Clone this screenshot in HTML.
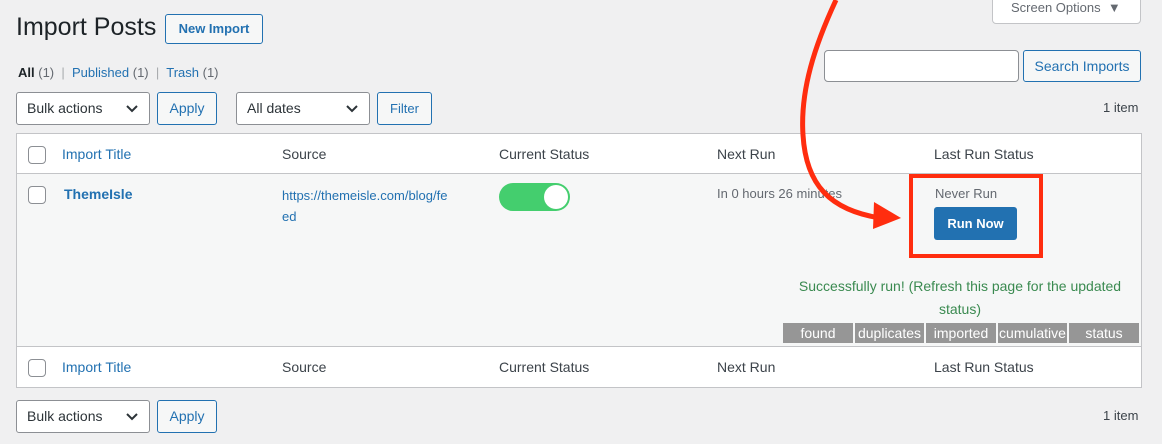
<!DOCTYPE html>
<html><head><style>
*{box-sizing:border-box;margin:0;padding:0}
body{width:1162px;height:444px;background:#f0f0f1;font-family:"Liberation Sans",sans-serif;font-size:14px;color:#3c434a;position:relative;overflow:hidden}
.a{position:absolute;white-space:nowrap}
.btn{position:absolute;border:1px solid #2271b1;color:#2271b1;background:#f6f7f7;border-radius:3px;text-align:center;font-size:14px}
.sel{position:absolute;border:1px solid #8c8f94;background:#fff;border-radius:3px;font-size:14px;padding-left:10px;color:#2c3338}
.sel svg{position:absolute;right:10px;top:11px}
.cb{position:absolute;width:18px;height:18px;border:1px solid #8c8f94;border-radius:4px;background:#fff}
.lnk{color:#2271b1}
.cell{position:absolute;top:323px;height:20px;background:#969696;color:#fff;text-align:center;font-size:14px;line-height:20px}
</style></head><body>
<div class="a" style="left:16px;top:13px;font-size:25px;color:#1d2327">Import Posts</div>
<div class="btn" style="left:165px;top:14px;width:98px;height:30px;line-height:28px;font-weight:bold;font-size:13px">New Import</div>
<div class="a" style="left:992px;top:-8px;width:149px;height:32px;background:#fff;border:1px solid #c3c4c7;border-radius:0 0 4px 4px;padding:7px 0 0 18px;font-size:13px;color:#646970">Screen Options &nbsp;▼</div>
<div class="a" style="left:18px;top:65px;font-size:13px"><b style="color:#1d2327;font-weight:600">All</b> <span style="color:#646970">(1)</span> &nbsp;<span style="color:#a7aaad">|</span>&nbsp; <span class="lnk">Published</span> <span style="color:#646970">(1)</span> &nbsp;<span style="color:#a7aaad">|</span>&nbsp; <span class="lnk">Trash</span> <span style="color:#646970">(1)</span></div>
<div class="a" style="left:824px;top:50px;width:195px;height:32px;background:#fff;border:1px solid #8c8f94;border-radius:4px"></div>
<div class="btn" style="left:1023px;top:50px;width:118px;height:32px;line-height:30px">Search Imports</div>
<div class="sel" style="left:16px;top:92px;width:134px;height:33px;line-height:31px">Bulk actions<svg width="14" height="10"><path d="M2 2l5 5 5-5" stroke="#2c3338" stroke-width="2" fill="none"/></svg></div>
<div class="btn" style="left:157px;top:92px;width:60px;height:33px;line-height:31px">Apply</div>
<div class="sel" style="left:236px;top:92px;width:134px;height:33px;line-height:31px">All dates<svg width="14" height="10"><path d="M2 2l5 5 5-5" stroke="#2c3338" stroke-width="2" fill="none"/></svg></div>
<div class="btn" style="left:377px;top:92px;width:55px;height:33px;line-height:31px;font-size:13px">Filter</div>
<div class="a" style="left:1103px;top:100px;font-size:13px">1 item</div>

<div class="a" style="left:16px;top:133px;width:1126px;height:255px;background:#fff;border:1px solid #c3c4c7"></div>
<div class="a" style="left:17px;top:173px;width:1124px;height:174px;background:#f6f7f7;border-top:1px solid #c3c4c7;border-bottom:1px solid #c3c4c7"></div>

<div class="cb" style="left:28px;top:146px"></div>
<div class="a lnk" style="left:62px;top:146px">Import Title</div>
<div class="a" style="left:282px;top:146px">Source</div>
<div class="a" style="left:499px;top:146px">Current Status</div>
<div class="a" style="left:717px;top:146px">Next Run</div>
<div class="a" style="left:934px;top:146px">Last Run Status</div>

<div class="cb" style="left:28px;top:186px"></div>
<div class="a lnk" style="left:64px;top:186px;font-weight:bold">ThemeIsle</div>
<div class="a lnk" style="left:282px;top:185px;font-size:13px;line-height:21px">https://themeisle.com/blog/fe<br>ed</div>
<div class="a" style="left:499px;top:183px;width:71px;height:28px;border-radius:14px;background:#44ce6e"><div style="position:absolute;right:2px;top:2px;width:24px;height:24px;border-radius:50%;background:#fff"></div></div>
<div class="a" style="left:717px;top:186px;font-size:13px;color:#646970">In 0 hours 26 minutes</div>
<div class="a" style="left:935px;top:186px;font-size:13px;color:#646970">Never Run</div>
<div class="a" style="left:934px;top:207px;width:83px;height:33px;background:#2271b1;border-radius:3px;color:#fff;font-weight:bold;font-size:13px;text-align:center;line-height:33px">Run Now</div>
<div class="a" style="left:909px;top:174px;width:134px;height:84px;border:4px solid #ff2d0f"></div>
<div class="a" style="left:782px;top:275px;width:356px;text-align:center;white-space:normal;color:#3a8a50;line-height:23px">Successfully run! (Refresh this page for the updated status)</div>
<div class="cell" style="left:783px;width:70px">found</div>
<div class="cell" style="left:855px;width:69px">duplicates</div>
<div class="cell" style="left:926px;width:70px">imported</div>
<div class="cell" style="left:998px;width:69px">cumulative</div>
<div class="cell" style="left:1069px;width:70px">status</div>

<div class="cb" style="left:28px;top:359px"></div>
<div class="a lnk" style="left:62px;top:359px">Import Title</div>
<div class="a" style="left:282px;top:359px">Source</div>
<div class="a" style="left:499px;top:359px">Current Status</div>
<div class="a" style="left:717px;top:359px">Next Run</div>
<div class="a" style="left:934px;top:359px">Last Run Status</div>

<div class="sel" style="left:16px;top:400px;width:134px;height:33px;line-height:31px">Bulk actions<svg width="14" height="10"><path d="M2 2l5 5 5-5" stroke="#2c3338" stroke-width="2" fill="none"/></svg></div>
<div class="btn" style="left:157px;top:400px;width:60px;height:33px;line-height:31px">Apply</div>
<div class="a" style="left:1103px;top:408px;font-size:13px">1 item</div>

<svg class="a" style="left:0;top:0" width="1162" height="444">
<path d="M836 0 C815 45 800 90 803 135 C806 185 830 210 880 218" stroke="#ff2d0f" stroke-width="5" fill="none"/>
<path d="M874 202 L901 218 L873 229 Z" fill="#ff2d0f"/>
</svg>
</body></html>
